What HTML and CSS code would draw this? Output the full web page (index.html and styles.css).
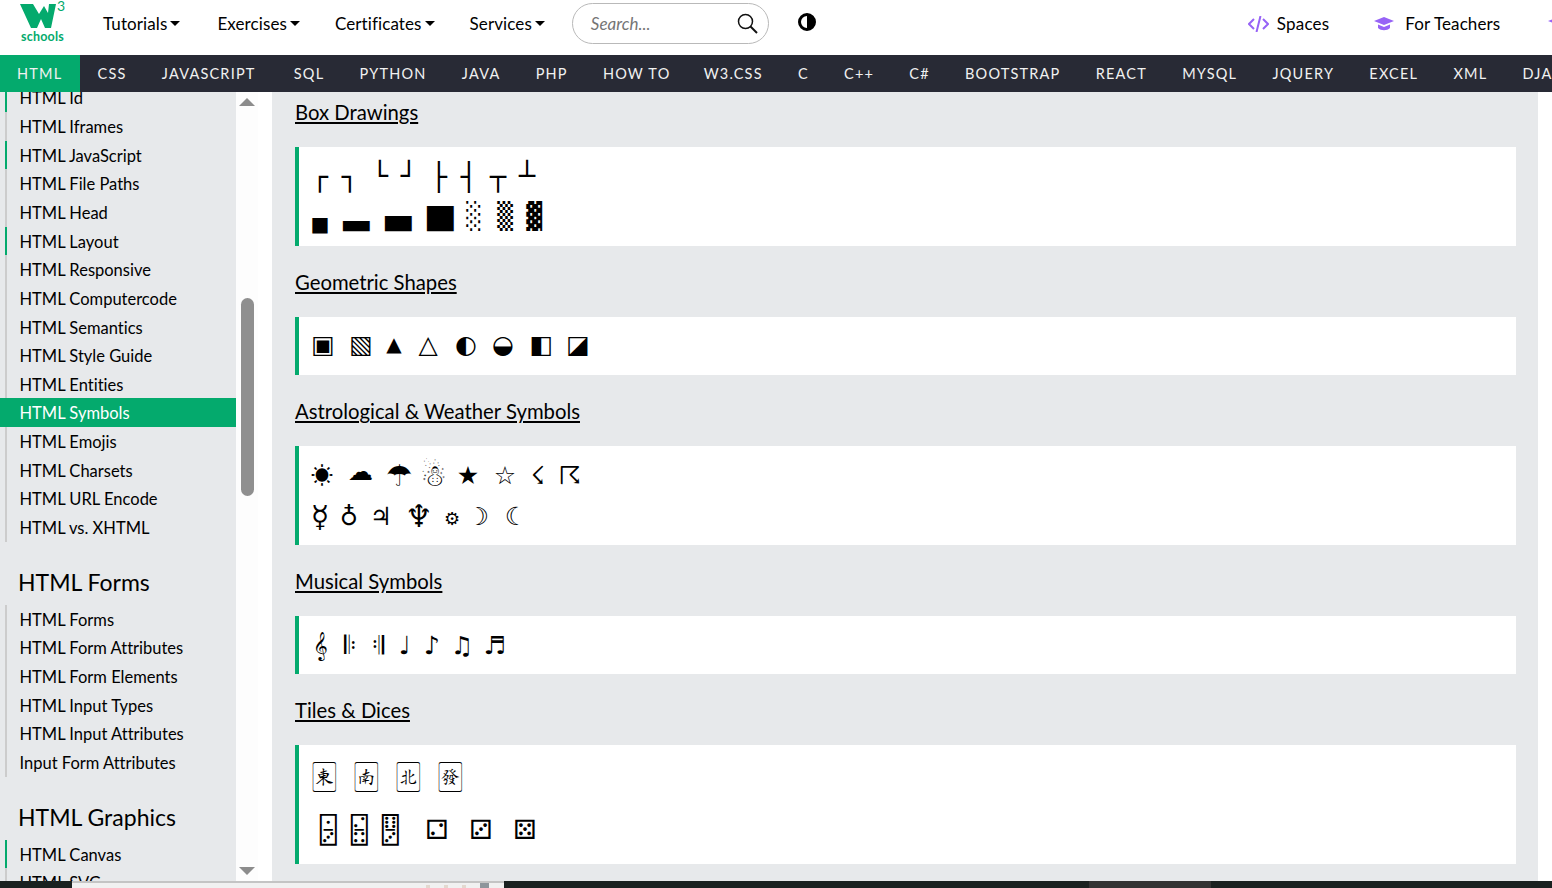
FILE: index.html
```html
<!DOCTYPE html>
<html lang="en">
<head>
  <meta charset="UTF-8" />
  <title>HTML Symbols</title>
  <link rel="stylesheet" href="styles.css">
</head>
<body>
  <header class="topbar">
    <a class="logo" href="#">
      <svg class="logo-w" width="36" height="25" viewBox="0 0 36 25"><path fill="#04aa6d" d="M0 0H13L19 10L24 2L28 9L29 0H36L31 24H25L21 15L17 24H11Z"/></svg>
      <span class="logo-3">3</span>
      <span class="logo-text">schools</span>
    </a>
    <a class="menu" href="#">Tutorials<i class="caret"></i></a>
    <a class="menu" href="#">Exercises<i class="caret"></i></a>
    <a class="menu" href="#">Certificates<i class="caret"></i></a>
    <a class="menu" href="#">Services<i class="caret"></i></a>
    <div class="search">
      <span>Search...</span>
      <svg width="21" height="21" viewBox="0 0 21 21" fill="none" stroke="#111" stroke-width="1.5"><circle cx="8.5" cy="8.5" r="7"/><path d="M13.5 13.5L20 20" stroke-width="2"/></svg>
    </div>
    <svg class="contrast" width="18" height="18" viewBox="0 0 18 18"><circle cx="9" cy="9" r="7.500" fill="#fff" stroke="#000" stroke-width="3"/><path d="M9 1a8 8 0 0 1 0 16z"/></svg>
    <a class="side-link spaces" href="#">
      <svg width="21" height="16" viewBox="0 0 21 16" fill="none" stroke="#9763f6" stroke-width="2"><path d="M6 3L1 8l5 5M15 3l5 5-5 5M12.500 0L8.500 16"/></svg>
      Spaces
    </a>
    <a class="side-link teachers" href="#">
      <svg width="20" height="14" viewBox="0 0 20 14" fill="#9763f6"><path d="M10 0L20 4 10 8 0 4z"/><path d="M4 7.500l6 2.500 6-2.500V11c-3 3-9 3-12 0z"/></svg>
      For Teachers
    </a>
    <svg class="get-icon" width="14" height="20" viewBox="0 0 14 20" fill="#9763f6"><path d="M7 0l2 5 5 2-5 2-2 5-2-5-5-2 5-2z"/></svg>
  </header>

  <nav class="subnav">
    <a class="active" href="#">HTML</a>
    <a href="#">CSS</a>
    <a class="wider" href="#">JAVASCRIPT</a>
    <a href="#">SQL</a>
    <a href="#">PYTHON</a>
    <a href="#">JAVA</a>
    <a href="#">PHP</a>
    <a class="tighter" href="#">HOW TO</a>
    <a href="#">W3.CSS</a>
    <a href="#">C</a>
    <a href="#">C++</a>
    <a href="#">C#</a>
    <a href="#">BOOTSTRAP</a>
    <a href="#">REACT</a>
    <a href="#">MYSQL</a>
    <a href="#">JQUERY</a>
    <a href="#">EXCEL</a>
    <a href="#">XML</a>
    <a href="#">DJANGO</a>
  </nav>

  <div class="content">
    <aside class="sidebar">
      <div class="side-list">
        <ul class="first-list">
          <li class="seen">HTML Id</li>
          <li>HTML Iframes</li>
          <li class="seen">HTML JavaScript</li>
          <li>HTML File Paths</li>
          <li>HTML Head</li>
          <li class="seen">HTML Layout</li>
          <li>HTML Responsive</li>
          <li>HTML Computercode</li>
          <li>HTML Semantics</li>
          <li>HTML Style Guide</li>
          <li>HTML Entities</li>
          <li class="current">HTML Symbols</li>
          <li>HTML Emojis</li>
          <li>HTML Charsets</li>
          <li>HTML URL Encode</li>
          <li>HTML vs. XHTML</li>
        </ul>
        <h2>HTML Forms</h2>
        <ul>
          <li>HTML Forms</li>
          <li>HTML Form Attributes</li>
          <li>HTML Form Elements</li>
          <li>HTML Input Types</li>
          <li>HTML Input Attributes</li>
          <li>Input Form Attributes</li>
        </ul>
        <h2>HTML Graphics</h2>
        <ul>
          <li class="seen">HTML Canvas</li>
          <li>HTML SVG</li>
        </ul>
      </div>
      <div class="scrollbar">
        <i class="arrow-up"></i>
        <i class="thumb"></i>
        <i class="arrow-down"></i>
      </div>
    </aside>

    <main class="page">
      <h3>Box Drawings</h3>
      <div class="card">
        <div class="sym mono">
          <span class="s0">┌</span><span class="g6">┐</span><span class="g6 rise">└</span><span class="g5 rise">┘</span><span class="g6">├</span><span class="g6">┤</span><span class="g5">┬</span><span class="g5 rise">┴</span>
        </div>
        <div class="sym blocks">
          <span class="small">■</span><span class="g11 lift">▂</span><span class="g18 lift">▃</span><span class="g18 lift">▅</span><span class="g11 shade">░</span><span class="g7 shade">▒</span><span class="g5 shade">▓</span>
        </div>
      </div>

      <h3>Geometric Shapes</h3>
      <div class="card">
        <div class="sym up">
          <span class="s1">▣</span><span class="g14">▧</span><span class="g9 small-tri">▲</span><span class="g10">△</span><span class="g14">◐</span><span class="g13">◒</span><span class="g14">◧</span><span class="g13">◪</span>
        </div>
      </div>

      <h3>Astrological &amp; Weather Symbols</h3>
      <div class="card">
        <div class="sym down">
          <span class="cjk">☀</span><span class="g14 lift-cloud">☁</span><span class="g14 grow">☂</span><span class="g10 grow">☃</span><span class="g12">★</span><span class="g13">☆</span><span class="g9">☇</span><span class="g8">☈</span>
        </div>
        <div class="sym down">
          <span class="s0 grow">☿</span><span class="g5">♁</span><span class="g8">♃</span><span class="g12 large">♆</span><span class="g11 tiny">⚙</span><span class="g2">☽</span><span class="g14">☾</span>
        </div>
      </div>

      <h3>Musical Symbols</h3>
      <div class="card">
        <div class="sym down">
          <span class="s0">𝄞</span><span class="g6">𝄆</span><span class="g4">𝄇</span><span class="g3">♩</span><span class="g3">♪</span><span class="g6">♫</span><span class="g9">♬</span>
        </div>
      </div>

      <h3>Tiles &amp; Dices</h3>
      <div class="card">
        <div class="sym tall tiles">
          <span class="s2">🀀</span><span class="g18">🀁</span><span class="g18">🀃</span><span class="g18">🀅</span>
        </div>
        <div class="sym tall">
          <span class="s6">🁭</span><span class="g7">🁵</span><span class="g7">🂐</span><span class="g23">⚁</span><span class="g20">⚂</span><span class="g20">⚄</span>
        </div>
      </div>
    </main>
    <div class="page-right"></div>
  </div>

  <div class="taskbar">
    <div class="tb-window">
      <i class="tb-bit tan"></i>
      <i class="tb-bit tan"></i>
      <i class="tb-bit tan"></i>
      <i class="tb-bit slate"></i>
    </div>
    <div class="tb-active"></div>
  </div>
</body>
</html>
```

FILE: styles.css
```css
* {
  box-sizing: border-box;
}
html, body {
  height: 100%;
}
body {
  margin: 0;
  display: flex;
  flex-direction: column;
  overflow: hidden;
  font-family: "Lato", "Open Sans", sans-serif;
  font-variant-ligatures: none;
  color: #000;
  background-color: #fff;
}
a {
  color: inherit;
  text-decoration: none;
}

/* top bar */
.topbar {
  height: 55px;
  flex: none;
  display: flex;
  align-items: center;
  overflow: hidden;
  white-space: nowrap;
  font-size: 17px;
  padding-bottom: 8px;
}
.logo {
  position: relative;
  width: 103px;
  height: 48px;
  flex: none;
  align-self: flex-start;
}
.logo-w {
  position: absolute;
  left: 20px;
  top: 4px;
}
.logo-3 {
  position: absolute;
  left: 57px;
  top: 0;
  font-size: 14px;
  line-height: 12px;
  color: #04aa6d;
}
.logo-text {
  position: absolute;
  left: 21px;
  top: 29px;
  font-size: 12.500px;
  font-weight: 700;
  letter-spacing: 0.2px;
  color: #04aa6d;
}
.menu {
  display: flex;
  align-items: center;
  margin-right: 35px;
  letter-spacing: 0.1px;
}
.caret {
  width: 0;
  height: 0;
  margin-left: 3px;
  border-left: 5px solid transparent;
  border-right: 5px solid transparent;
  border-top: 5px solid #000;
}
.menu:nth-of-type(2) {
  margin-right: 37px;
}
.menu:nth-of-type(5) {
  margin-right: 27px;
}
.search {
  width: 197px;
  height: 41px;
  flex: none;
  display: flex;
  align-items: center;
  justify-content: space-between;
  padding: 0 10px 0 18px;
  border: 1px solid #b9b9b9;
  border-radius: 21px;
  color: #757575;
  font-style: italic;
}
.contrast {
  flex: none;
  margin: 0 0 3px 29px;
}
.side-link {
  display: flex;
  align-items: center;
  gap: 8px;
  flex: none;
}
.spaces {
  margin-left: 432px;
  letter-spacing: 0.2px;
}
.teachers {
  gap: 11px;
  margin-left: 45px;
  letter-spacing: 0.1px;
}
.get-icon {
  flex: none;
  margin-left: 48px;
}

/* dark tutorial bar */
.subnav {
  height: 37px;
  flex: none;
  display: flex;
  align-items: center;
  overflow: hidden;
  white-space: nowrap;
  background-color: #282a35;
  color: #f1f1f1;
  font-size: 14.500px;
  letter-spacing: 1.200px;
}
.subnav a {
  height: 37px;
  line-height: 37px;
  padding: 0 17.600px;
}
.subnav .active {
  background-color: #04aa6d;
  padding-left: 17px;
}
.subnav .wider {
  padding-right: 20.600px;
}
.subnav .tighter {
  padding-right: 15.600px;
}

.content {
  flex: 1;
  min-height: 0;
  display: flex;
  overflow: hidden;
}

/* left menu */
.sidebar {
  width: 258px;
  flex: none;
  display: flex;
}
.side-list {
  width: 236px;
  background-color: #e7e9eb;
  overflow: hidden;
  font-size: 16.500px;
}
.side-list ul {
  list-style: none;
  margin: 0;
  padding: 0;
}
.first-list {
  margin-top: -8.600px !important;
}
.side-list li {
  height: 28.650px;
  line-height: 30px;
  margin-left: 5px;
  padding-left: 12.500px;
  border-left: 2px solid #ccc;
}
.side-list .seen {
  border-left-color: #04aa6d;
}
.side-list .current {
  margin-left: 0;
  padding-left: 19.500px;
  border-left: 0;
  background-color: #04aa6d;
  color: #fff;
}
.side-list h2 {
  margin: 21px 0 6px 18px;
  height: 36px;
  line-height: 38px;
  font-size: 23px;
  font-weight: 400;
}
.scrollbar {
  width: 22px;
  display: flex;
  flex-direction: column;
  align-items: center;
  background-color: #fdfdfd;
}
.arrow-up, .arrow-down {
  width: 0;
  height: 0;
  border-left: 8px solid transparent;
  border-right: 8px solid transparent;
}
.arrow-up {
  margin-top: 6px;
  border-bottom: 8px solid #8c8c8c;
}
.thumb {
  width: 13px;
  height: 198px;
  margin-top: 192px;
  border-radius: 7px;
  background-color: #8f8f8f;
}
.arrow-down {
  margin-top: auto;
  margin-bottom: 6px;
  border-top: 8px solid #8c8c8c;
}

/* main column */
.page {
  width: 1266px;
  flex: none;
  margin-left: 14px;
  padding: 6px 22px 0 23px;
  background-color: #e7e9eb;
}
.page h3 {
  height: 30px;
  line-height: 29px;
  margin: 22px 0 19px;
  font-size: 20.300px;
  font-weight: 400;
  text-decoration: underline;
}
.page h3:first-child {
  margin-top: 0;
}
.card {
  padding: 8px 0 9px 11px;
  background-color: #fff;
  border-left: 4px solid #04aa6d;
}
.sym {
  display: flex;
  align-items: center;
  height: 41px;
  font-family: "DejaVu Sans", sans-serif;
  font-size: 25px;
  line-height: 41px;
}
.sym span {
  width: 24px;
  flex: none;
  text-align: center;
}
.sym.up {
  padding-bottom: 2px;
}
.sym.down {
  padding-top: 1px;
}
.sym .small-tri {
  font-size: 20px;
}
.sym .cjk {
  font-family: "Noto Sans CJK JP", "DejaVu Sans", sans-serif;
  font-size: 22px;
  padding-bottom: 3px;
}
.sym .lift-cloud {
  padding-bottom: 7px;
}
.sym .grow {
  font-size: 30px;
}
.sym .large {
  font-size: 31px;
}
.sym .tiny {
  font-size: 18px;
  padding-top: 4px;
}
.sym.tall {
  height: 51px;
  font-size: 27px;
}
.sym.tiles {
  font-size: 30.500px;
  padding-bottom: 7px;
}
.mono {
  padding-top: 2px;
  font-family: "DejaVu Sans Mono", monospace;
  font-size: 27px;
}
.blocks {
  margin-left: -2px;
  font-size: 34px;
}
.blocks .small {
  font-size: 20px;
  padding-top: 15px;
}
.blocks .lift {
  padding-bottom: 10px;
}
.blocks .shade {
  font-family: "DejaVu Sans Mono", monospace;
  font-size: 26px;
}
.rise {
  align-self: flex-start;
  line-height: 32px;
  padding-top: 3px;
}
.s0 { margin-left: -2px; }
.s1 { margin-left: 1px; }
.s2 { margin-left: 2px; }
.s6 { margin-left: 6px; }
.g2 { margin-left: 2px; }
.g3 { margin-left: 3px; }
.g4 { margin-left: 4px; }
.g5 { margin-left: 5px; }
.g6 { margin-left: 6px; }
.g7 { margin-left: 7px; }
.g8 { margin-left: 8px; }
.g9 { margin-left: 9px; }
.g10 { margin-left: 10px; }
.g11 { margin-left: 11px; }
.g12 { margin-left: 12px; }
.g13 { margin-left: 13px; }
.g14 { margin-left: 14px; }
.g18 { margin-left: 18px; }
.g20 { margin-left: 20px; }
.g23 { margin-left: 23px; }

.page-right {
  flex: 1;
}

/* cropped window strip at the bottom */
.taskbar {
  height: 7px;
  flex: none;
  display: flex;
  background-color: #1a2120;
}
.tb-window {
  width: 432px;
  margin-left: 72px;
  padding-right: 15px;
  display: flex;
  justify-content: flex-end;
  align-items: flex-end;
  gap: 14px;
  background-color: #f1f1f1;
  border-top: 2px solid #c4c4c4;
}
.tb-bit {
  width: 4px;
  height: 3px;
}
.tb-bit.tan {
  background-color: #e3d8cf;
}
.tb-bit.slate {
  width: 9px;
  height: 5px;
  background-color: #8d959b;
}
.tb-active {
  width: 122px;
  margin-left: 585px;
  background-color: #333;
}
```
